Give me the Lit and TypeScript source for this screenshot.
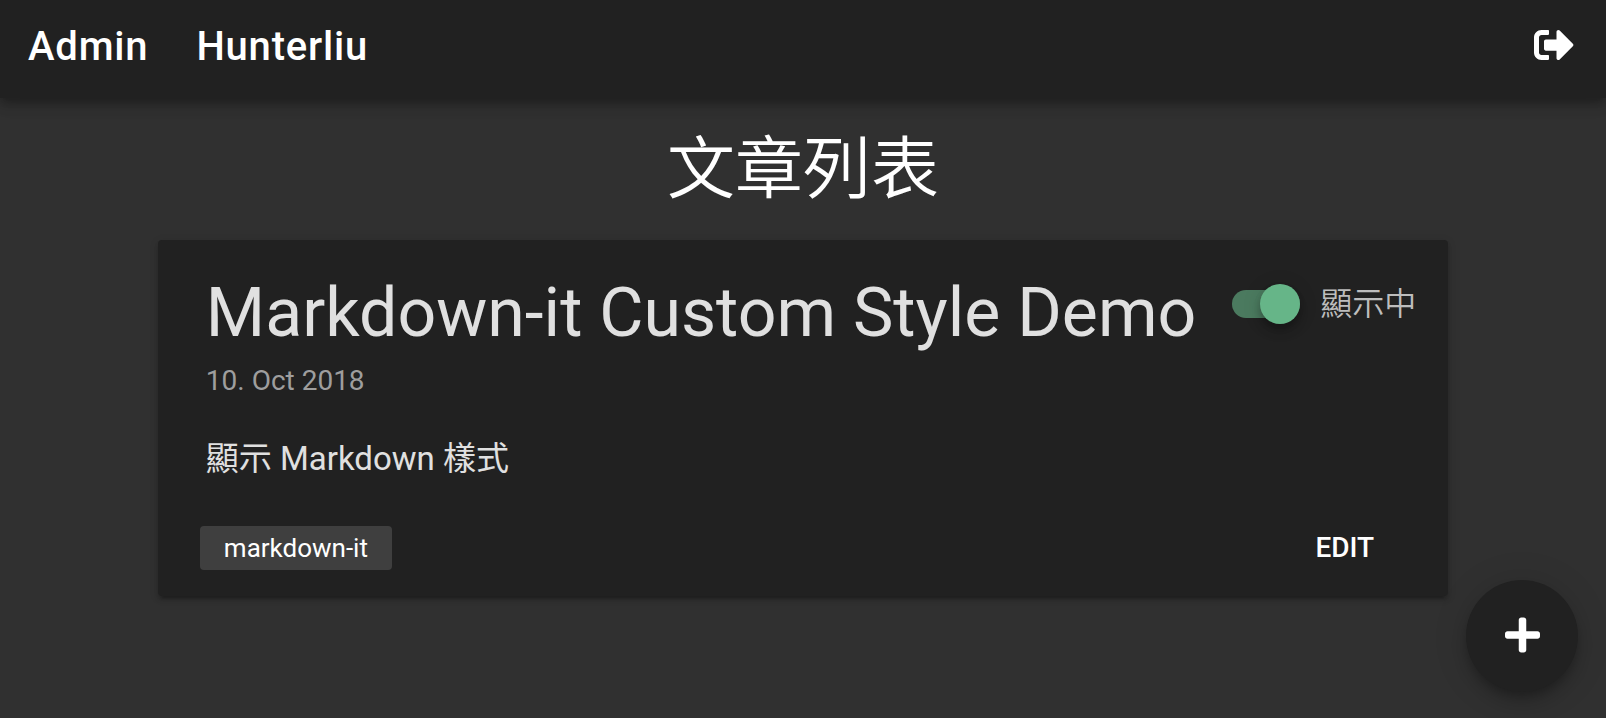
import { LitElement, html, css, svg } from "lit";
import { customElement, property, state } from "lit/decorators.js";

interface Article {
  title: string;
  date: string;
  summary: string;
  tags: string[];
}

const signOutIcon = svg`<path d="M497 273L329 441c-15 15-41 4.5-41-17v-96H152c-13.3 0-24-10.7-24-24v-96c0-13.3 10.7-24 24-24h136V88c0-21.4 25.9-32 41-17l168 168c9.3 9.4 9.3 24.6 0 34zM192 436v-40c0-6.6-5.4-12-12-12H96c-17.7 0-32-14.3-32-32V160c0-17.7 14.3-32 32-32h84c6.6 0 12-5.4 12-12V76c0-6.6-5.4-12-12-12H96c-53 0-96 43-96 96v192c0 53 43 96 96 96h84c6.6 0 12-5.4 12-12z"/>`;
const plusIcon = svg`<path d="M416 208H272V64c0-17.67-14.33-32-32-32h-32c-17.67 0-32 14.33-32 32v144H32c-17.67 0-32 14.33-32 32v32c0 17.67 14.33 32 32 32h144v144c0 17.67 14.33 32 32 32h32c17.67 0 32-14.33 32-32V304h144c17.67 0 32-14.33 32-32v-32c0-17.67-14.33-32-32-32z"/>`;

@customElement("article-card")
export class ArticleCard extends LitElement {
  @property({ attribute: false }) article!: Article;
  @state() private visible = true;

  static styles = css`
    :host {
      display: block;
    }
    .card {
      background: #212121;
      border-radius: 4px;
      color: #e0e0e0;
      padding: 32px 32px 24px 48px;
      box-shadow: 0 6px 2px -4px rgba(0, 0, 0, 0.2), 0 4px 4px rgba(0, 0, 0, 0.14),
        0 2px 10px rgba(0, 0, 0, 0.12);
    }
    .top {
      display: flex;
      align-items: flex-start;
      justify-content: space-between;
      gap: 32px;
    }
    .title {
      margin: 0;
      font-size: 68px;
      line-height: 82px;
      font-weight: 400;
    }
    .date {
      display: block;
      margin-top: 6px;
      font-size: 28px;
      line-height: 42px;
      color: #9e9e9e;
    }
    .toggle {
      display: flex;
      align-items: center;
      gap: 20px;
      padding-top: 8px;
      font-size: 32px;
      line-height: 48px;
      font-weight: 350;
      white-space: nowrap;
      color: #bdbdbd;
      cursor: pointer;
    }
    .switch {
      appearance: none;
      display: flex;
      align-items: center;
      width: 68px;
      height: 28px;
      margin: 0;
      border-radius: 14px;
      background: #616161;
      cursor: pointer;
    }
    .switch::before {
      content: "";
      width: 40px;
      height: 40px;
      flex: none;
      border-radius: 50%;
      background: #bdbdbd;
      box-shadow: 0 4px 8px -2px rgba(0, 0, 0, 0.2), 0 8px 10px rgba(0, 0, 0, 0.14),
        0 2px 20px rgba(0, 0, 0, 0.12);
    }
    .switch:checked {
      background: #4b7a5f;
    }
    .switch:checked::before {
      margin-left: auto;
      background: #66b588;
    }
    .summary {
      margin: 32px 0 0;
      font-size: 33px;
      line-height: 50px;
    }
    .actions {
      display: flex;
      align-items: center;
      justify-content: space-between;
      margin-top: 40px;
      margin-left: -6px;
      padding-right: 10px;
    }
    .tags {
      display: flex;
      gap: 16px;
      margin: 0;
      padding: 0;
      list-style: none;
    }
    .tag {
      padding: 0 24px;
      border-radius: 4px;
      background: #3f3f3f;
      color: #fff;
      font-size: 26px;
      line-height: 44px;
    }
    .edit {
      border: 0;
      padding: 0 32px;
      background: none;
      color: #fff;
      font: 500 28px / 48px Roboto, sans-serif;
      cursor: pointer;
    }
  `;

  render() {
    const { title, date, summary, tags } = this.article;
    return html`
      <article class="card">
        <div class="top">
          <h2 class="title">${title}</h2>
          <label class="toggle">
            <input
              class="switch"
              type="checkbox"
              role="switch"
              .checked=${this.visible}
              @change=${(e: Event) => (this.visible = (e.target as HTMLInputElement).checked)}
            />
            <span>${this.visible ? "顯示中" : "已隱藏"}</span>
          </label>
        </div>
        <time class="date" datetime="2018-10-10">${date}</time>
        <p class="summary">${summary}</p>
        <div class="actions">
          <ul class="tags">
            ${tags.map((tag) => html`<li class="tag">${tag}</li>`)}
          </ul>
          <button class="edit" type="button">EDIT</button>
        </div>
      </article>
    `;
  }
}

@customElement("app-root")
export class AppRoot extends LitElement {
  private articles: Article[] = [
    {
      title: "Markdown-it Custom Style Demo",
      date: "10. Oct 2018",
      summary: "顯示 Markdown 樣式",
      tags: ["markdown-it"],
    },
  ];

  static styles = css`
    :host {
      display: block;
      min-height: 100vh;
      background: #303030;
      color: #fff;
      font-family: Roboto, "Noto Sans CJK TC", sans-serif;
    }
    .bar {
      display: flex;
      align-items: center;
      justify-content: space-between;
      padding: 21px 32px 25px 28px;
      background: #212121;
      box-shadow: 0 4px 8px -2px rgba(0, 0, 0, 0.2), 0 8px 10px rgba(0, 0, 0, 0.14),
        0 2px 20px rgba(0, 0, 0, 0.12);
    }
    .nav {
      display: flex;
      gap: 48px;
    }
    .link {
      color: #fff;
      font-size: 40px;
      line-height: 52px;
      font-weight: 500;
      letter-spacing: 0.02em;
      text-decoration: none;
    }
    .logout {
      display: flex;
      padding: 0 0 4px;
      border: 0;
      background: none;
      color: #fff;
      cursor: pointer;
    }
    .icon {
      height: 40px;
      fill: currentColor;
    }
    .heading {
      margin: 32px 0 30px;
      font-size: 68px;
      line-height: 80px;
      font-weight: 350;
      text-align: center;
    }
    .list {
      box-sizing: border-box;
      width: calc(100% * 10 / 12);
      margin: 0 auto;
      padding: 0 24px;
    }
    .add {
      position: fixed;
      right: 28px;
      bottom: 26px;
      display: flex;
      align-items: center;
      justify-content: center;
      width: 112px;
      height: 112px;
      padding: 0 0 2px;
      border: 0;
      border-radius: 50%;
      background: #212121;
      color: #fff;
      cursor: pointer;
      box-shadow: 0 6px 10px -2px rgba(0, 0, 0, 0.2), 0 12px 20px rgba(0, 0, 0, 0.14),
        0 2px 36px rgba(0, 0, 0, 0.12);
    }
  `;

  render() {
    return html`
      <header class="bar">
        <nav class="nav">
          <a class="link" href="#admin">Admin</a>
          <a class="link" href="#home">Hunterliu</a>
        </nav>
        <button class="logout" type="button" aria-label="Log out">
          <svg class="icon" viewBox="0 0 512 512" aria-hidden="true">${signOutIcon}</svg>
        </button>
      </header>
      <main>
        <h1 class="heading">文章列表</h1>
        <section class="list">
          ${this.articles.map((a) => html`<article-card .article=${a}></article-card>`)}
        </section>
      </main>
      <button class="add" type="button" aria-label="Add article">
        <svg class="icon" viewBox="0 0 448 512" aria-hidden="true">${plusIcon}</svg>
      </button>
    `;
  }
}
